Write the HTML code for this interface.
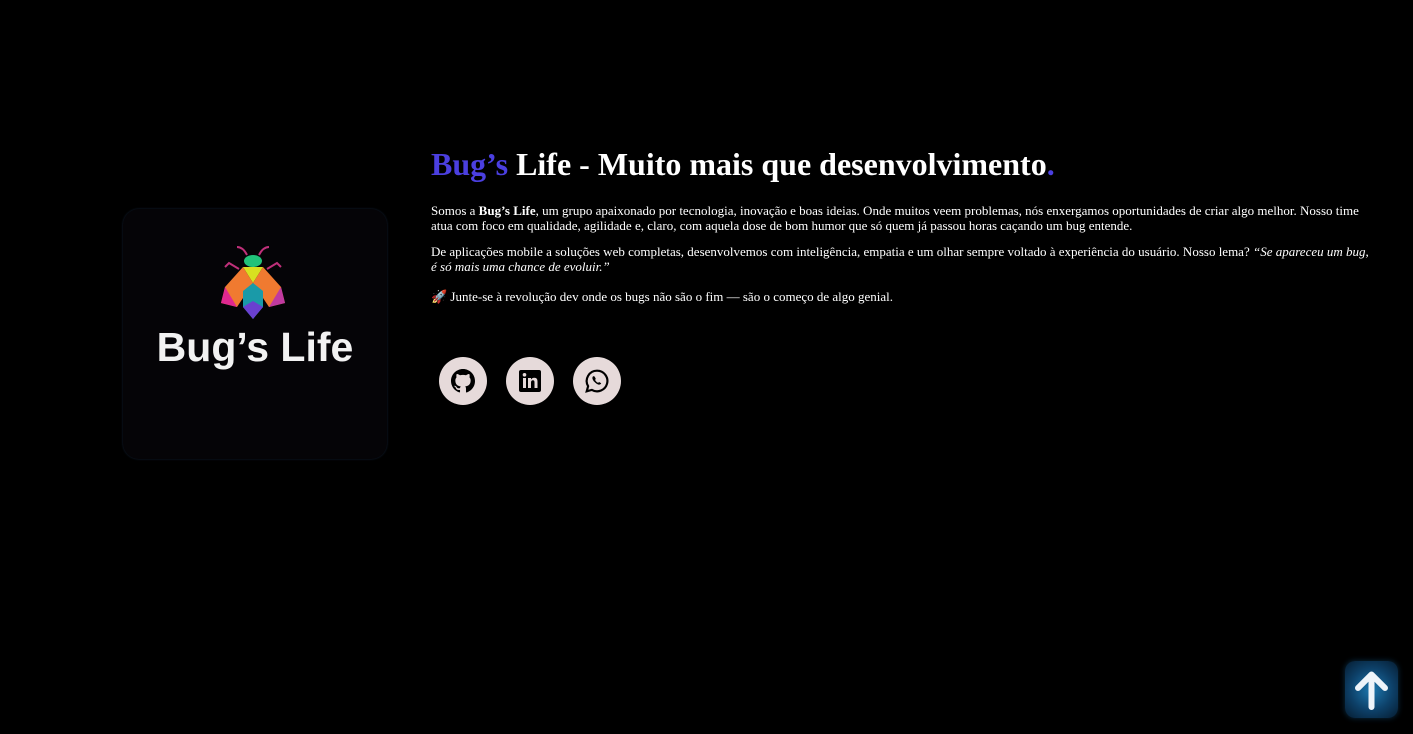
<!DOCTYPE html>
<html><head><meta charset="utf-8"><style>
body{margin:0;background:#000;width:1413px;height:734px;overflow:hidden;position:relative;font-family:"Liberation Serif",serif;color:#fff}
.logo{position:absolute;left:123px;top:209px;width:264px;height:250px;background:#050407;border-radius:16px;box-shadow:0 0 2px rgba(40,70,110,.5)}
.logo .t{position:absolute;left:0;width:264px;top:115px;text-align:center;font-family:"Liberation Sans",sans-serif;font-weight:bold;font-size:41px;color:#f2f2f2}
h1{position:absolute;left:431px;top:146px;margin:0;font-size:32px;font-weight:bold;line-height:36px;white-space:nowrap}
.p{position:absolute;left:431px;width:945px;font-size:13px;line-height:15px}
.s{position:absolute;top:357px;width:48px;height:48px;border-radius:50%;background:#e6dada;display:flex;align-items:center;justify-content:center}
.up{position:absolute;left:1345px;top:661px;width:53px;height:57px;border-radius:10px;background:radial-gradient(circle,#1d78b0 0%,#0d4068 55%,#061c30 100%);box-shadow:0 0 6px rgba(20,90,140,.5)}
</style></head><body>
<div class="logo">
<svg style="position:absolute;left:94px;top:34px" width="72" height="80" viewBox="0 0 72 80">
<path d="M30 12 Q26 4 20 4 M42 12 Q46 4 52 4" stroke="#c0307a" stroke-width="2" fill="none"/>
<path d="M22 26 L12 20 L8 24 M50 26 L60 20 L64 24" stroke="#c0307a" stroke-width="2" fill="none"/>
<ellipse cx="36" cy="18" rx="9" ry="6" fill="#22c27a"/>
<path d="M26 24 L46 24 L36 40Z" fill="#d8e020"/>
<path d="M26 24 L8 44 L4 60 L20 64 L36 40Z" fill="#f07a30"/>
<path d="M8 44 L4 60 L20 64Z" fill="#e02890"/>
<path d="M46 24 L64 44 L68 60 L52 64 L36 40Z" fill="#f07a30"/>
<path d="M64 44 L68 60 L52 64Z" fill="#c03aa0"/>
<path d="M26 48 L36 40 L46 48 L46 64 L36 76 L26 64Z" fill="#1a9aa8"/>
<path d="M26 64 L36 76 L46 64 L36 58Z" fill="#6a40d0"/>
</svg>
<div class="t">Bug’s Life</div>
</div>
<h1><span style="color:#4b3fe0">Bug’s</span> Life - Muito mais que desenvolvimento<span style="color:#4b3fe0">.</span></h1>
<div class="p" style="top:203px">Somos a <b>Bug’s Life</b>, um grupo apaixonado por tecnologia, inovação e boas ideias. Onde muitos veem problemas, nós enxergamos oportunidades de criar algo melhor. Nosso time atua com foco em qualidade, agilidade e, claro, com aquela dose de bom humor que só quem já passou horas caçando um bug entende.</div>
<div class="p" style="top:244px">De aplicações mobile a soluções web completas, desenvolvemos com inteligência, empatia e um olhar sempre voltado à experiência do usuário. Nosso lema? <i>“Se apareceu um bug,<br>é só mais uma chance de evoluir.”</i></div>
<div class="p" style="top:289px">🚀 Junte-se à revolução dev onde os bugs não são o fim — são o começo de algo genial.</div>
<div class="s" style="left:439px"><svg width="24" height="24" viewBox="0 0 16 16"><path fill="#000" d="M8 0C3.58 0 0 3.580 0 8c0 3.54 2.29 6.53 5.47 7.59.4.07.55-.17.55-.38v-1.33c-2.230.48-2.7-1.07-2.7-1.07-.36-.92-.89-1.17-.89-1.17-.73-.5.05-.49.05-.49.8.06 1.23.83 1.23.83.72 1.22 1.87.87 2.33.66.07-.52.28-.87.5-1.07-1.78-.2-3.64-.89-3.64-3.95 0-.87.31-1.59.82-2.15-.08-.2-.36-1.02.08-2.12 0 0 .67-.21 2.2.82a7.6 7.6 0 0 1 4 0c1.53-1.04 2.2-.82 2.2-.82.44 1.1.16 1.92.08 2.12.51.56.82 1.27.82 2.15 0 3.07-1.87 3.75-3.65 3.95.29.25.54.73.54 1.48v2.2c0 .21.15.46.55.38A8 8 0 0 0 16 8c0-4.42-3.58-8-8-8z"/></svg></div>
<div class="s" style="left:506px"><svg width="24" height="24" viewBox="0 0 24 24"><rect x="1" y="1" width="22" height="22" rx="2" fill="#000"/><rect x="5" y="9" width="3" height="10" fill="#e6dada"/><circle cx="6.5" cy="5.8" r="1.8" fill="#e6dada"/><path d="M10 9h3v1.5c.6-1 1.7-1.8 3.3-1.8 2.5 0 3.2 1.6 3.2 4V19h-3v-5.5c0-1.3-.3-2.2-1.6-2.2-1.4 0-1.9 1-1.900 2.3V19h-3z" fill="#e6dada"/></svg></div>
<div class="s" style="left:573px"><svg width="26" height="26" viewBox="0 0 24 24"><path d="M12 2.5a9.5 9.5 0 0 0-8.2 14.3L2.5 21.5l4.8-1.3A9.5 9.5 0 1 0 12 2.5z" fill="none" stroke="#000" stroke-width="2"/><path d="M8.5 7.5c-.5.5-1 1.3-.6 2.6.6 1.8 2.4 3.8 4.6 4.9 1.3.6 2.2.5 2.8-.1l.6-.8-2-1.2-.9.8c-1-.4-2.3-1.6-2.8-2.7l.7-.9-1-2.1z" fill="#000"/></svg></div>
<div class="up"><svg width="53" height="57" viewBox="0 0 53 57"><path d="M26.5 46V14M13 27L26.5 13.5 40 27" stroke="#eef4fa" stroke-width="6" stroke-linecap="round" stroke-linejoin="round" fill="none"/></svg></div>
</body></html>
